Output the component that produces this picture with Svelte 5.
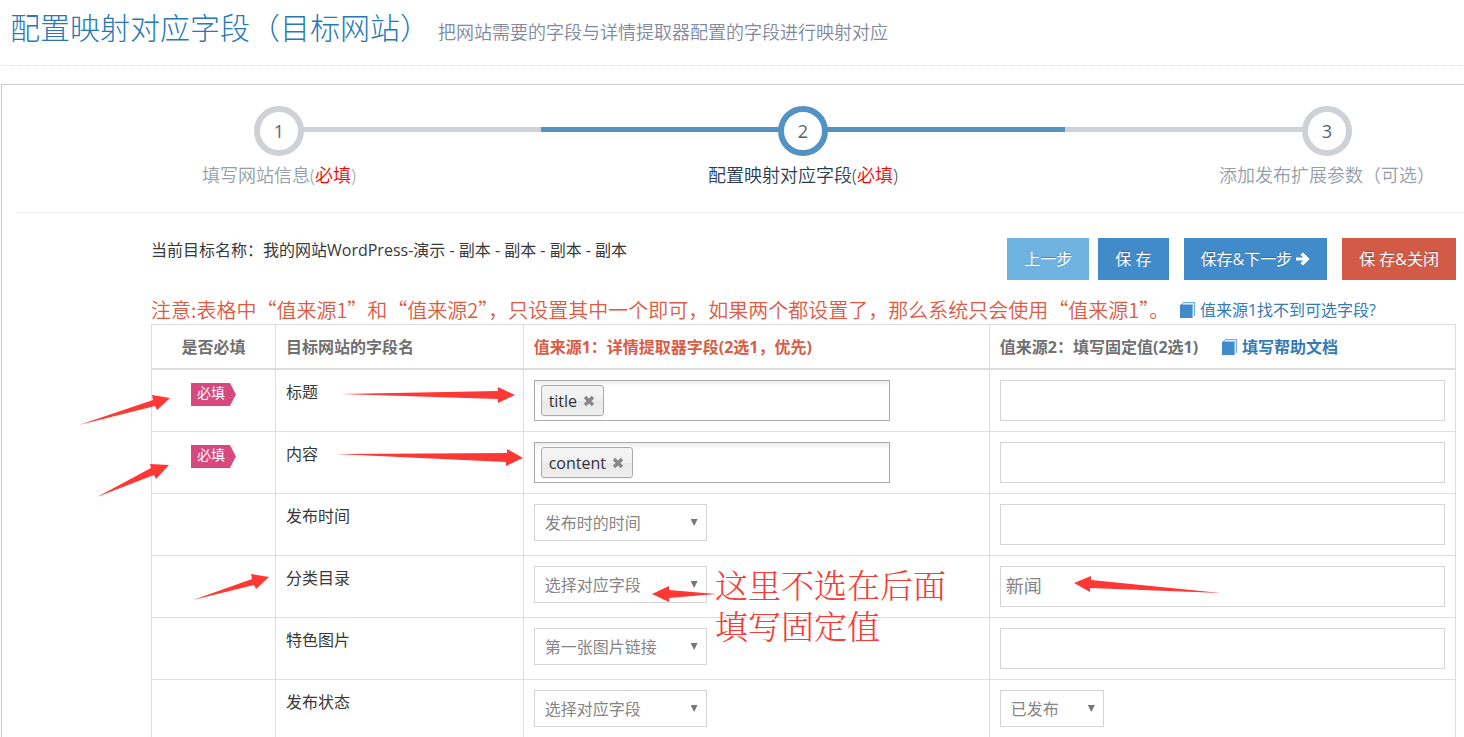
<script>
    const steps = [
        { label: '填写网站信息', tail: '必填' },
        { label: '配置映射对应字段', tail: '必填', active: true },
        { label: '添加发布扩展参数（可选）' }
    ];

    let rows = $state([
        { name: '标题', required: true, tags: ['title'], fixed: '' },
        { name: '内容', required: true, tags: ['content'], fixed: '' },
        { name: '发布时间', source: '发布时的时间', fixed: '' },
        { name: '分类目录', source: '选择对应字段', fixed: '新闻' },
        { name: '特色图片', source: '第一张图片链接', fixed: '' },
        { name: '发布状态', source: '选择对应字段', status: '已发布' }
    ]);

    const sourceOptions = ['选择对应字段', '发布时的时间', '第一张图片链接'];
    const statusOptions = ['已发布', '草稿'];

    const arrows = [
        '79,425 153,400 152,395 170,398 157,410 155,406',
        '97,497 151,468 150,464 169,465 156,479 154,475',
        '341,394 498,391 498,387 515,395 498,403 498,399',
        '336,454 507,453 507,449 523,458 506,466 506,462',
        '193,600 252,579 251,574 269,577 256,589 254,585',
        '716,594 669,590 669,586 652,594 669,602 669,598',
        '1221,593 1091,580 1091,576 1074,583 1090,592 1090,588'
    ];

    function removeTag(row, tag) {
        row.tags = row.tags.filter((t) => t != tag);
    }
</script>

{#snippet book()}
    <svg class="book" viewBox="0 0 16 16" aria-hidden="true">
        <path d="M3 .7H14.4V14" fill="none" stroke="#6db3e6" stroke-width="1.3" />
        <path d="M3.4 .5L0 3.2V4H12.6V2.6H2.2Z" fill="#428bca" />
        <rect x="0" y="3" width="12.6" height="13" fill="#428bca" />
    </svg>
{/snippet}

<div class="page">
    <header>
        <h1>配置映射对应字段（目标网站）</h1>
        <small>把网站需要的字段与详情提取器配置的字段进行映射对应</small>
    </header>

    <main>
        <ol class="steps">
            {#each steps as step, i}
                <li class:active={step.active}>
                    <span class="step">{i + 1}</span>
                    <span class="title">{step.label}{#if step.tail}(<em>{step.tail}</em>){/if}</span>
                </li>
            {/each}
        </ol>

        <div class="content">
            <div class="toolbar">
                <p>当前目标名称：我的网站WordPress-演示 - 副本 - 副本 - 副本 - 副本</p>
                <div class="buttons">
                    <button class="light">上一步</button>
                    <button>保 存</button>
                    <button>保存&amp;下一步
                        <svg viewBox="0 0 14 14" aria-hidden="true"><path d="M0 5.4H7.2L4.6 2.8L7 .4L13.6 7L7 13.6L4.6 11.2L7.2 8.6H0Z" fill="#fff" /></svg>
                    </button>
                    <button class="danger">保 存&amp;关闭</button>
                </div>
            </div>

            <div class="notice">
                <strong>注意:表格中“值来源1”和“值来源2”，只设置其中一个即可，如果两个都设置了，那么系统只会使用“值来源1”。</strong>
                <a href="#help">{@render book()}值来源1找不到可选字段?</a>
            </div>

            <table>
                <colgroup>
                    <col class="col-need" />
                    <col class="col-name" />
                    <col />
                    <col />
                </colgroup>
                <thead>
                    <tr>
                        <th class="need">是否必填</th>
                        <th>目标网站的字段名</th>
                        <th class="red">值来源1：详情提取器字段(2选1，优先)</th>
                        <th>
                            <div class="head">值来源2：填写固定值(2选1) <a href="#doc">{@render book()}填写帮助文档</a></div>
                        </th>
                    </tr>
                </thead>
                <tbody>
                    {#each rows as row}
                        <tr>
                            <td class="need">
                                {#if row.required}<span class="badge">必填</span>{/if}
                            </td>
                            <td>{row.name}</td>
                            <td>
                                {#if row.tags}
                                    <div class="chosen">
                                        {#each row.tags as tag}
                                            <span class="tag">{tag}
                                                <button aria-label="删除 {tag}" onclick={() => removeTag(row, tag)}>
                                                    <svg viewBox="0 0 12 12" aria-hidden="true"><path d="M2 2L10 10M10 2L2 10" stroke="#888" stroke-width="3.4" /></svg>
                                                </button>
                                            </span>
                                        {/each}
                                    </div>
                                {:else}
                                    <span class="select">
                                        <select aria-label="{row.name} 值来源1" bind:value={row.source}>
                                            {#each sourceOptions as option}<option>{option}</option>{/each}
                                        </select>
                                    </span>
                                {/if}
                            </td>
                            <td>
                                {#if row.status}
                                    <span class="select short">
                                        <select aria-label="{row.name} 值来源2" bind:value={row.status}>
                                            {#each statusOptions as option}<option>{option}</option>{/each}
                                        </select>
                                    </span>
                                {:else}
                                    <input type="text" aria-label="{row.name} 值来源2" bind:value={row.fixed} />
                                {/if}
                            </td>
                        </tr>
                    {/each}
                </tbody>
            </table>
        </div>
    </main>

    <!-- tutorial marks drawn over the form -->
    <svg class="marks" aria-hidden="true">
        {#each arrows as points}<polygon {points} />{/each}
    </svg>
    <p class="hint">这里不选在后面<br />填写固定值</p>
</div>

<style>
    :global(body) {
        margin: 0;
        background: #fff;
    }

    .page {
        position: relative;
        height: 100vh;
        overflow: hidden;
        font-family: "Open Sans", "Noto Sans CJK SC", sans-serif;
        font-size: 16px;
        line-height: 24px;
        color: #393939;
    }

    header {
        display: flex;
        align-items: baseline;
        gap: 8px;
        height: 65px;
        padding-left: 10px;
        border-bottom: 1px dotted #ddd;
        white-space: nowrap;
    }

    h1 {
        margin: 0;
        font-size: 30px;
        line-height: 56px;
        font-weight: 300;
        color: #2679b5;
    }

    small {
        font-size: 18px;
        font-weight: 350;
        color: #8089a0;
    }

    main {
        margin: 18px 0 0 1px;
        padding-left: 15px;
        border: 1px solid #ccc;
        border-right: none;
        overflow: hidden;
    }

    /* the wizard is wider than the visible area */
    .steps {
        display: grid;
        grid-template-columns: repeat(3, 1fr);
        margin: 0 -125px 0 0;
        padding: 21px 0 25px;
        list-style: none;
        border-bottom: 1px solid #eee;
        text-align: center;
    }

    .steps li {
        display: flex;
        flex-direction: column;
        align-items: center;
        gap: 7px;
        color: #949ea7;
        background: linear-gradient(#ced1d6, #ced1d6) 0 21px / 100% 5px no-repeat;
    }

    .steps li:first-child {
        background-position: 100% 21px;
        background-size: 50% 5px;
    }

    .steps li:last-child {
        background-size: 50% 5px;
    }

    .steps li.active {
        color: #2b3d53;
        background-image: linear-gradient(#5293c4, #5293c4);
    }

    .step {
        width: 38px;
        height: 38px;
        border: 6px solid #ced1d6;
        border-radius: 50%;
        background: #fff;
        font-size: 18px;
        line-height: 38px;
        color: #546474;
    }

    .active .step {
        border-color: #5293c4;
    }

    .title {
        font-size: 18px;
        font-weight: 350;
    }

    .title em {
        font-style: normal;
        color: #f00;
    }

    .content {
        padding: 25px 8px 0 134px;
    }

    .toolbar {
        display: flex;
        justify-content: space-between;
        height: 58px;
    }

    .toolbar p {
        margin: 0;
    }

    .buttons {
        display: flex;
        align-items: flex-start;
        gap: 15px;
    }

    .buttons button {
        display: flex;
        align-items: center;
        height: 42px;
        padding: 0 17px;
        border: none;
        background: #428bca;
        color: #fff;
        font: inherit;
        text-shadow: 0 -1px 0 rgba(0, 0, 0, 0.25);
        white-space: nowrap;
    }

    .buttons .light {
        margin-right: -6px;
        background: #6fb3e0;
    }

    .buttons .danger {
        background: #d15b47;
    }

    .buttons svg {
        width: 14px;
        height: 14px;
        margin-left: 4px;
    }

    .notice {
        display: flex;
        align-items: center;
        justify-content: space-between;
        height: 28px;
        padding-right: 80px;
        white-space: nowrap;
    }

    .notice strong {
        font-family: "Noto Sans CJK SC", sans-serif;
        font-size: 20px;
        font-weight: 350;
        color: #dd5a43;
    }

    a {
        display: inline-flex;
        align-items: center;
        gap: 4px;
        color: #337ab7;
        text-decoration: none;
    }

    .book {
        width: 16px;
        height: 16px;
    }

    table {
        width: 100%;
        table-layout: fixed;
        border-collapse: collapse;
    }

    .col-need {
        width: 9.5%;
    }

    .col-name {
        width: 19%;
    }

    th, td {
        padding: 10px;
        border: 1px solid #ddd;
        text-align: left;
        vertical-align: top;
    }

    th {
        padding-bottom: 9px;
        border-bottom-width: 2px;
        color: #707070;
        font-weight: bold;
        white-space: nowrap;
    }

    td {
        height: 41px;
    }

    .need {
        text-align: center;
    }

    .red {
        color: #dd5a43;
    }

    .head {
        display: flex;
        gap: 24px;
    }

    .badge {
        display: inline-block;
        width: 45px;
        height: 23px;
        margin-top: 3px;
        padding: 0 11px 0 6px;
        box-sizing: border-box;
        background: #d6487e;
        clip-path: polygon(0 0, 39px 0, 45px 50%, 39px 100%, 0 100%);
        color: #fff;
        font-size: 14px;
        line-height: 20px;
    }

    .chosen {
        display: flex;
        width: 356px;
        height: 41px;
        padding: 4px 6px;
        box-sizing: border-box;
        border: 1px solid #aaa;
        background: linear-gradient(#eee 1%, #fff 15%);
    }

    .tag {
        display: flex;
        align-items: center;
        gap: 6px;
        height: 29px;
        padding: 0 8px 0 7px;
        border: 1px solid #aaa;
        border-radius: 3px;
        background: linear-gradient(#f4f4f4 20%, #f0f0f0 50%, #e8e8e8 52%, #eee 100%);
        box-shadow: 0 1px 0 rgba(0, 0, 0, 0.05);
        color: #333;
    }

    .tag button {
        display: flex;
        padding: 0;
        border: none;
        background: none;
    }

    .tag svg {
        width: 12px;
        height: 12px;
    }

    .select {
        position: relative;
        display: block;
        width: 173px;
    }

    .short {
        width: 104px;
    }

    .select::after {
        content: "";
        position: absolute;
        top: 15px;
        right: 9px;
        width: 7px;
        height: 7px;
        background: #777;
        clip-path: polygon(0 0, 100% 0, 50% 100%);
        pointer-events: none;
    }

    select {
        display: block;
        width: 100%;
        height: 37px;
        padding: 0 10px;
        appearance: none;
        border: 1px solid #d5d5d5;
        border-radius: 0;
        background: #fff;
        color: #858585;
        font: inherit;
    }

    input {
        display: block;
        width: 100%;
        height: 41px;
        padding: 0 5px 3px;
        box-sizing: border-box;
        border: 1px solid #d5d5d5;
        background: #fff;
        color: #858585;
        font: inherit;
        font-size: 18px;
    }

    .marks {
        position: absolute;
        top: 0;
        left: 0;
        width: 100%;
        height: 100%;
        fill: #fe3835;
        pointer-events: none;
    }

    .hint {
        position: absolute;
        top: 567px;
        left: 715px;
        margin: 0;
        color: #fe3835;
        font-family: "Liberation Serif", "Noto Serif CJK SC", "Noto Sans CJK SC", serif;
        font-size: 33px;
        font-weight: 300;
        line-height: 41px;
        pointer-events: none;
    }
</style>
